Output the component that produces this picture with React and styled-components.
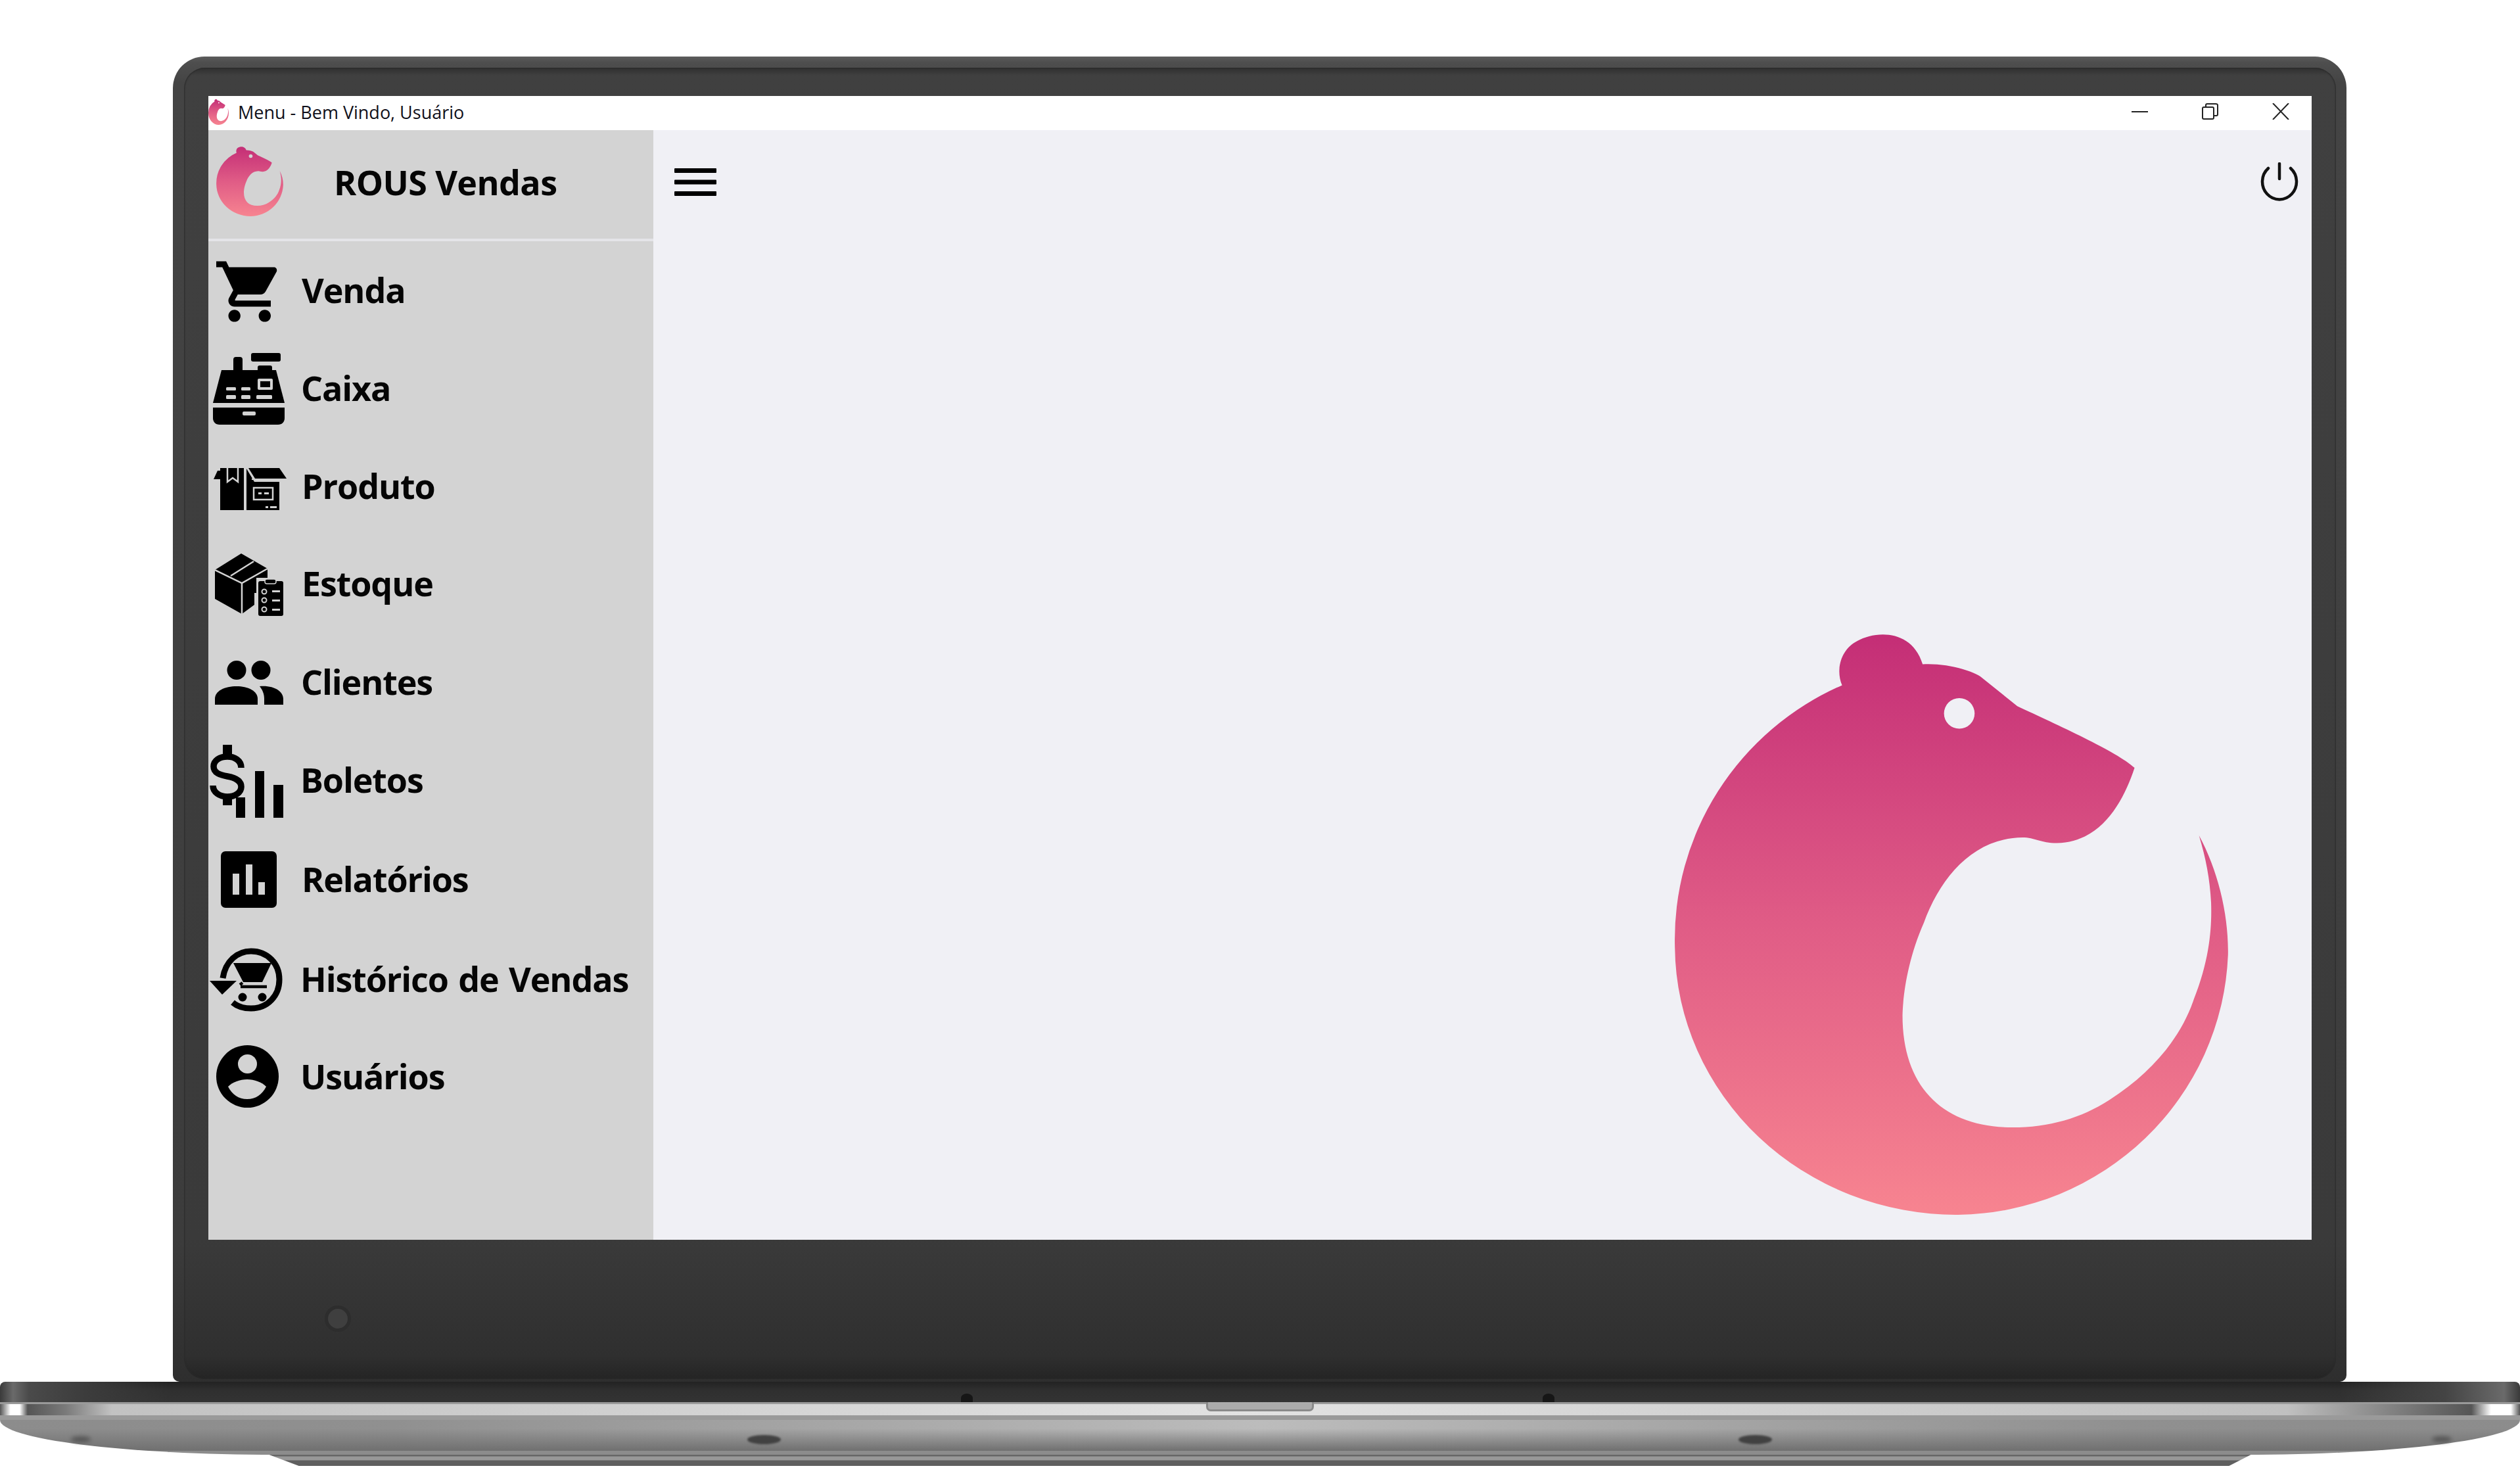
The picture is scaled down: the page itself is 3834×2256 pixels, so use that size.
import { useId } from "react";
import styled, { createGlobalStyle } from "styled-components";

const SIDE = "#d3d3d3";
const MAIN = "#f0f0f5";

const GlobalStyle = createGlobalStyle`
  html, body {
    margin: 0;
    padding: 0;
    background: #ffffff;
  }
`;

const Page = styled.div`
  width: 3834px;
  height: 2256px;
  padding-top: 86px;
  box-sizing: border-box;
  overflow: hidden;
  display: flex;
  flex-direction: column;
  align-items: center;
  background: #ffffff;
`;

const Lid = styled.div`
  width: 3307px;
  height: 2016px;
  margin-left: -1px;
  box-sizing: border-box;
  padding: 17px 16px 4px 17px;
  border-radius: 48px 48px 10px 10px;
  background: linear-gradient(180deg, #5c5c5c 0, #4e4e4e 9px, #444444 40px, #3c3c3c 1800px, #2e2e2e 100%);
`;

const Bezel = styled.div`
  height: 100%;
  box-sizing: border-box;
  padding: 43px 37px 0;
  border-radius: 32px;
  background: linear-gradient(180deg, #2f2f2f 0, #404040 12px, #3a3a3a 1780px, #2f2f2f 1960px, #242424 100%);
  box-shadow: inset 0 0 2px 1px #2a2a2a;
`;

const Chin = styled.div`
  height: 212px;
  box-sizing: border-box;
  padding: 100px 0 0 177px;
`;

const Camera = styled.div`
  width: 30px;
  height: 30px;
  border: 5px solid #2d2d2d;
  border-radius: 50%;
  background: #3f3f3f;
`;

const Window = styled.div`
  width: 3200px;
  height: 1740px;
  display: flex;
  flex-direction: column;
  background: ${MAIN};
`;

const TitleBar = styled.div`
  height: 52px;
  flex: none;
  box-sizing: border-box;
  padding-bottom: 3px;
  display: flex;
  align-items: center;
  background: #ffffff;
`;

const WindowTitle = styled.span`
  margin-left: 14px;
  font-family: "Open Sans", "Liberation Sans", sans-serif;
  font-size: 27px;
  color: #10101a;
  white-space: nowrap;
`;

const WindowButtons = styled.div`
  margin-left: auto;
  display: flex;
  align-items: center;
  padding: 0 34px 2px 0;
  gap: 82px;
`;

const Body = styled.div`
  flex: 1;
  min-height: 0;
  display: flex;
`;

const Sidebar = styled.aside`
  width: 677px;
  flex: none;
  background: ${SIDE};
`;

const Brand = styled.div`
  height: 165px;
  box-sizing: border-box;
  display: flex;
  align-items: center;
  padding: 0 0 9px 12px;
`;

const BrandName = styled.div`
  margin-left: 77px;
  font-family: "Open Sans", "Liberation Sans", sans-serif;
  font-size: 52px;
  font-weight: 700;
  letter-spacing: -0.6px;
  color: #050505;
  white-space: nowrap;
`;

const Divider = styled.div`
  height: 4px;
  background: #e4e4e8;
`;

const Nav = styled.nav`
  display: flex;
  flex-direction: column;
`;

const NavRow = styled.a`
  height: 140px;
  flex: none;
  margin-top: ${(p) => p.$gap}px;
  display: flex;
  align-items: center;
  color: #050505;
`;

const IconSlot = styled.span`
  width: ${(p) => p.$width}px;
  flex: none;
  box-sizing: border-box;
  padding-left: ${(p) => p.$left}px;
  margin-top: ${(p) => p.$dy}px;
  display: flex;
`;

const NavLabel = styled.span`
  font-family: "Open Sans", "Liberation Sans", sans-serif;
  font-size: 52px;
  font-weight: 700;
  letter-spacing: -1.1px;
  word-spacing: 3px;
  white-space: nowrap;
`;

const Content = styled.main`
  flex: 1;
  min-width: 0;
  display: flex;
  flex-direction: column;
  padding: 49px 20px 38px 32px;
`;

const TopBar = styled.div`
  display: flex;
  align-items: center;
  justify-content: space-between;
`;

const Watermark = styled.div`
  margin: auto 106px 0 auto;
  line-height: 0;
`;

const Base = styled.div`
  width: 3834px;
  flex: none;
  display: flex;
  flex-direction: column;
  align-items: center;
`;

const Hinge = styled.div`
  width: 100%;
  height: 31px;
  border-radius: 8px 8px 0 0;
  background:
    linear-gradient(90deg, #3a3a3a 0, #6a6a6a 20px, #4a4a4a 44px, #3c3c3c 130px, rgba(46, 46, 46, 0) 260px, rgba(46, 46, 46, 0) 3560px, #444444 3720px, #6a6a6a 3810px, #3a3a3a 100%),
    linear-gradient(180deg, #222222 0, #2f2f2f 40%, #333333 100%);
`;

const Rail = styled.div`
  position: relative;
  width: 100%;
  height: 27px;
  box-sizing: border-box;
  border-top: 3px solid #9a9a9a;
  border-bottom: 7px solid #9a9a9a;
  background: linear-gradient(90deg, #555555 0, #ffffff 16px, #ffffff 30px, #555555 42px, #7a7a7a 100px, #c2c2c2 170px, #e2e2e2 1900px, #c0c0c0 3480px, #6a6a6a 3700px, #555555 3760px, #ffffff 3790px, #ffffff 3820px, #555555 100%);
`;

const Notch = styled.div`
  position: absolute;
  left: 1835px;
  top: -3px;
  width: 164px;
  height: 14px;
  box-sizing: border-box;
  border: 3px solid #8a8a8a;
  border-top: 0;
  border-radius: 0 0 7px 7px;
  background: #ababab;
`;

const Pin = styled.div`
  position: absolute;
  left: ${(p) => p.$x}px;
  top: -16px;
  width: 18px;
  height: 13px;
  border-radius: 50% 50% 0 0;
  background: #161616;
`;

const Belly = styled.div`
  position: relative;
  width: 100%;
  height: 53px;
  border-radius: 0 0 420px 420px / 0 0 53px 53px;
  background:
    linear-gradient(180deg, rgba(120, 120, 120, 0) 0, rgba(120, 120, 120, 0) 25%, #707070 88%, #8c8c8c 89%, #8c8c8c 100%),
    linear-gradient(90deg, #8c8c8c 0, #909090 600px, #bcbcbc 1917px, #909090 3240px, #8c8c8c 100%);
`;

const Grommet = styled.div`
  position: absolute;
  left: ${(p) => p.$x}px;
  top: ${(p) => p.$y}px;
  width: ${(p) => p.$w}px;
  height: ${(p) => p.$h}px;
  border-radius: 50%;
  background: #3a3a3a;
  opacity: ${(p) => p.$opacity};
  filter: blur(${(p) => p.$blur}px);
`;

const Foot = styled.div`
  width: 3015px;
  height: 17px;
  clip-path: polygon(0 0, 100% 0, 98.9% 100%, 1.5% 100%);
  background: linear-gradient(180deg, #666666 0, #666666 2px, #989898 3px, #989898 8px, #5f5f5f 9px, #5f5f5f 100%);
`;

/* the rat logo, drawn in the coordinates of a 1568 crop */
const RAT =
  "M527 200C510 160 525 110 565 90C610 65 700 60 727 148C780 145 840 160 870 178L962 252C1060 298 1210 365 1253 405C1225 490 1170 590 1060 592C1020 592 1005 578 975 578C850 580 770 680 730 790C690 880 678 970 677 1020C677 1200 780 1298 950 1298C1040 1298 1120 1275 1190 1230C1300 1160 1370 1070 1400 980C1440 880 1445 800 1443 740C1440 680 1430 630 1413 573C1460 660 1487 770 1485 870A680 672 0 0 1 815 1515A700 670 0 0 1 112 852A695 690 0 0 1 527 200ZM818 232A38 38 0 1 0 818 308A38 38 0 1 0 818 232Z";

const RatLogo = ({ width, height }) => {
  const id = useId();
  return (
    <svg width={width} height={height} viewBox="110 72 1377 1443" preserveAspectRatio="none">
      <defs>
        <linearGradient id={id} x1="0" y1="0" x2="0" y2="1">
          <stop offset="0" stopColor="#c42e76" />
          <stop offset="0.5" stopColor="#e05c86" />
          <stop offset="1" stopColor="#f78490" />
        </linearGradient>
      </defs>
      <path d={RAT} fill={`url(#${id})`} fillRule="evenodd" />
    </svg>
  );
};

const CartIcon = () => (
  <svg width="95" height="95" viewBox="1 2 20.6 20">
    <path d="M7 18c-1.1 0-1.99.9-1.99 2S5.9 22 7 22s2-.9 2-2-.9-2-2-2zM1 2v2h2l3.6 7.59-1.35 2.45c-.16.28-.25.61-.25.96 0 1.1.9 2 2 2h12v-2H7.42c-.14 0-.25-.11-.25-.25l.03-.12.9-1.63h7.45c.75 0 1.41-.41 1.75-1.03l3.58-6.49c.08-.14.12-.31.12-.48 0-.55-.45-1-1-1H5.21l-.94-2H1zm16 16c-1.1 0-1.99.9-1.99 2s.89 2 1.99 2 2-.9 2-2-.9-2-2-2z" />
  </svg>
);

const RegisterIcon = () => (
  <svg width="109" height="109" viewBox="0 0 109 109">
    <rect x="58" y="0" width="45" height="13" rx="3" />
    <rect x="31" y="6" width="14" height="36" rx="4" />
    <rect x="68" y="19" width="22" height="12" rx="3" />
    <path d="M13 26H96L109 76H0Z" />
    <path d="M0 83H109V99C109 105 105 109 99 109H10C4 109 0 105 0 99Z" />
    <rect x="45" y="89" width="20" height="6" rx="2" fill={SIDE} />
    <rect x="20" y="52" width="15" height="5" rx="1.5" fill={SIDE} />
    <rect x="43" y="52" width="14" height="5" rx="1.5" fill={SIDE} />
    <rect x="20" y="64" width="15" height="6" rx="1.5" fill={SIDE} />
    <rect x="43" y="64" width="14" height="6" rx="1.5" fill={SIDE} />
    <rect x="66" y="64" width="24" height="6" rx="1.5" fill={SIDE} />
    <rect x="68" y="39" width="23" height="17" rx="2" fill={SIDE} />
    <rect x="72" y="43" width="15" height="9" />
  </svg>
);

const ProductIcon = () => (
  <svg width="111" height="64" viewBox="0 0 111 64">
    <path d="M10 0H46V64H10V17H0L6 4L10 4Z" />
    <path d="M21 0V21L29 15L37 21V0" fill="none" stroke={SIDE} strokeWidth="2.5" />
    <path d="M50 1L62 21H100V64H50Z" />
    <path d="M53 0H100L111 16H63Z" />
    <path d="M58 17H103" stroke={SIDE} strokeWidth="2" />
    <rect x="61" y="30" width="29" height="18" fill="none" stroke={SIDE} strokeWidth="2.5" />
    <rect x="68" y="37" width="5" height="3" fill={SIDE} />
    <rect x="77" y="37" width="7" height="3" fill={SIDE} />
    <rect x="79" y="58" width="4" height="3" fill={SIDE} />
    <rect x="86" y="58" width="10" height="3" fill={SIDE} />
  </svg>
);

const StockIcon = () => (
  <svg width="104" height="95" viewBox="0 0 104 95">
    <path d="M40 0L80 23V60H60V78L41 92L0 69V25Z" />
    <path d="M0 25L41 45L80 23M41 45V92M24 34L59 12" fill="none" stroke={SIDE} strokeWidth="2.5" />
    <rect x="63" y="37" width="42" height="60" fill={SIDE} />
    <rect x="66" y="42" width="38" height="53" rx="3" />
    <rect x="76" y="39" width="17" height="7" rx="3" stroke={SIDE} strokeWidth="1.5" />
    <circle cx="75" cy="58" r="3.5" fill="none" stroke={SIDE} strokeWidth="2" />
    <circle cx="75" cy="71" r="3.5" fill="none" stroke={SIDE} strokeWidth="2" />
    <circle cx="75" cy="85" r="3.5" fill="none" stroke={SIDE} strokeWidth="2" />
    <rect x="87" y="56" width="12" height="3" fill={SIDE} />
    <rect x="87" y="70" width="12" height="3" fill={SIDE} />
    <rect x="87" y="84" width="12" height="3" fill={SIDE} />
  </svg>
);

const ClientsIcon = () => (
  <svg width="104" height="67" viewBox="0 0 104 67">
    <circle cx="33" cy="14.5" r="14.5" />
    <circle cx="70" cy="14.5" r="14.5" />
    <path d="M0 67V58C0 46 15 39 33 39C50 39 65 46 65 58V67Z" />
    <path d="M68 39C90 37 104 47 104 58V67H75V58C75 50 72 44 68 39Z" />
  </svg>
);

const BillsIcon = () => (
  <svg width="112" height="111" viewBox="0 0 112 111">
    <rect x="20" y="0" width="14" height="18" />
    <rect x="20" y="76" width="14" height="16" />
    <path d="M48 35C48 24 38 18 27 18C15 18 6 24 6 33C6 43 16 46 27 48C38 50 48 54 48 64C48 73 38 79 27 79C15 79 5 72 5 62" fill="none" stroke="#000" strokeWidth="9.5" />
    <rect x="40" y="80" width="14" height="31" />
    <rect x="69" y="40" width="14" height="71" />
    <rect x="97" y="61" width="15" height="50" />
  </svg>
);

const ReportIcon = () => (
  <svg width="85" height="86" viewBox="0 0 85 86">
    <rect x="0" y="0" width="85" height="86" rx="7" />
    <rect x="18" y="34" width="10" height="32" fill={SIDE} />
    <rect x="38" y="20" width="10" height="46" fill={SIDE} />
    <rect x="57" y="47" width="10" height="19" fill={SIDE} />
  </svg>
);

const HistoryIcon = () => (
  <svg width="111" height="97" viewBox="0 0 111 97">
    <path d="M20 46C24 20 42 5 63 5C88 5 106 24 106 48C106 73 88 92 63 92C52 92 42 89 35 83" fill="none" stroke="#000" strokeWidth="9" />
    <path d="M0 50H41L19 71Z" />
    <path d="M36 23H94L80 52H51Z" />
    <path d="M46 56L50 53M47 59H87" fill="none" stroke="#000" strokeWidth="4.5" />
    <circle cx="50" cy="75" r="6.5" />
    <circle cx="80" cy="75" r="6.5" />
  </svg>
);

const UserIcon = () => (
  <svg width="95" height="95" viewBox="0 0 95 95">
    <circle cx="47.5" cy="47.5" r="47.5" />
    <circle cx="47.5" cy="28.5" r="14.5" fill={SIDE} />
    <path d="M18 63C25 56 36 52 47 52C58 52 69 56 76 63C70 75 60 82 47 82C34 82 24 75 18 63Z" fill={SIDE} />
  </svg>
);

const HamburgerIcon = () => (
  <svg width="64" height="42" viewBox="0 0 64 42">
    <rect x="0" y="0" width="64" height="7" rx="1" />
    <rect x="0" y="17.5" width="64" height="7" rx="1" />
    <rect x="0" y="35" width="64" height="7" rx="1" />
  </svg>
);

const PowerIcon = () => (
  <svg width="58" height="60" viewBox="-1 0 58 60" fill="none" stroke="#111" strokeWidth="4.5" strokeLinecap="round">
    <path d="M11 9A26 27 0 1 0 45 9" />
    <path d="M28 2V25" />
  </svg>
);

const MinimizeIcon = () => (
  <svg width="25" height="25" viewBox="0 0 25 25">
    <path d="M0 13H25" stroke="#222" strokeWidth="2" />
  </svg>
);

const RestoreIcon = () => (
  <svg width="25" height="25" viewBox="0 0 25 25" fill="none" stroke="#222" strokeWidth="2">
    <rect x="1" y="6" width="17" height="18" rx="2" />
    <path d="M6 5V3C6 2 7 1 8 1H21C23 1 24 2 24 3V17C24 18 23 19 22 19H19" />
  </svg>
);

const CloseIcon = () => (
  <svg width="26" height="25" viewBox="0 0 26 25">
    <path d="M1 0L25 25M25 0L1 25" stroke="#222" strokeWidth="2" />
  </svg>
);

const navItems = [
  { label: "Venda", Icon: CartIcon, gap: 3, width: 142, left: 12, dy: 6 },
  { label: "Caixa", Icon: RegisterIcon, gap: 9, width: 141, left: 7, dy: 4 },
  { label: "Produto", Icon: ProductIcon, gap: 9, width: 142, left: 8, dy: 12 },
  { label: "Estoque", Icon: StockIcon, gap: 8, width: 142, left: 10, dy: 6 },
  { label: "Clientes", Icon: ClientsIcon, gap: 10, width: 141, left: 10, dy: 4 },
  { label: "Boletos", Icon: BillsIcon, gap: 9, width: 140, left: 2, dy: 6 },
  { label: "Relatórios", Icon: ReportIcon, gap: 11, width: 142, left: 19, dy: 4 },
  { label: "Histórico de Vendas", Icon: HistoryIcon, gap: 12, width: 140, left: 2, dy: 4 },
  { label: "Usuários", Icon: UserIcon, gap: 8, width: 140, left: 12, dy: 2 },
];

export default function App() {
  return (
    <>
      <GlobalStyle />
      <Page>
        <Lid>
          <Bezel>
            <Window>
              <TitleBar>
                <RatLogo width={31} height={39} />
                <WindowTitle>Menu - Bem Vindo, Usuário</WindowTitle>
                <WindowButtons>
                  <MinimizeIcon />
                  <RestoreIcon />
                  <CloseIcon />
                </WindowButtons>
              </TitleBar>
              <Body>
                <Sidebar>
                  <Brand>
                    <RatLogo width={102} height={106} />
                    <BrandName>ROUS Vendas</BrandName>
                  </Brand>
                  <Divider />
                  <Nav>
                    {navItems.map(({ label, Icon, gap, width, left, dy }) => (
                      <NavRow key={label} $gap={gap}>
                        <IconSlot $width={width} $left={left} $dy={dy}>
                          <Icon />
                        </IconSlot>
                        <NavLabel>{label}</NavLabel>
                      </NavRow>
                    ))}
                  </Nav>
                </Sidebar>
                <Content>
                  <TopBar>
                    <HamburgerIcon />
                    <PowerIcon />
                  </TopBar>
                  <Watermark>
                    <RatLogo width={844} height={884} />
                  </Watermark>
                </Content>
              </Body>
            </Window>
            <Chin>
              <Camera />
            </Chin>
          </Bezel>
        </Lid>
        <Base>
          <Hinge />
          <Rail>
            <Notch />
            <Pin $x={1462} />
            <Pin $x={2347} />
          </Rail>
          <Belly>
            <Grommet $x={1137} $y={23} $w={51} $h={14} $blur={1.5} $opacity={0.9} />
            <Grommet $x={2645} $y={23} $w={51} $h={14} $blur={1.5} $opacity={0.9} />
            <Grommet $x={108} $y={25} $w={30} $h={9} $blur={3} $opacity={0.6} />
            <Grommet $x={3700} $y={25} $w={30} $h={9} $blur={3} $opacity={0.6} />
          </Belly>
          <Foot />
        </Base>
      </Page>
    </>
  );
}
